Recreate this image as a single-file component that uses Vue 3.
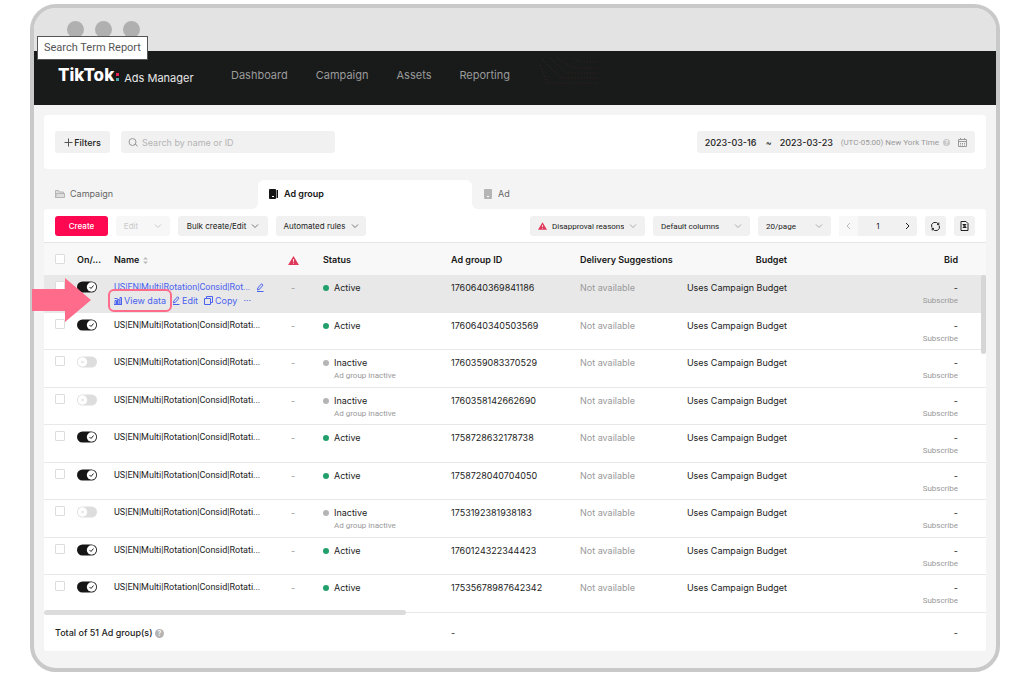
<template>
  <div class="page">
    <div class="window">
      <div class="titlebar">
        <i></i>
        <i></i>
        <i></i>
        <div class="tooltip" role="tooltip">Search Term Report</div>
      </div>

      <header class="nav">
        <div class="brand">
          <strong>TikTok</strong>
          <span class="colon"><b></b><b></b></span>
          <span class="product">Ads Manager</span>
        </div>
        <nav>
          <a v-for="item in menu" :key="item" href="#">{{ item }}</a>
        </nav>
        <svg class="pattern" width="62" height="28" viewBox="0 0 62 28">
          <path d="M34 1l8 4h18M18 1l17 10h25M12 1l15 15h33M4 3l18 18h38M1 8l7 18h52" />
        </svg>
      </header>

      <main>
        <section class="card filters">
          <button class="btn filter-btn">
            <svg width="9" height="9" viewBox="0 0 9 9"><path d="M4.5 .5v8M.5 4.5h8" /></svg>
            Filters
          </button>
          <label class="search">
            <svg width="10" height="10" viewBox="0 0 10 10">
              <circle cx="4.5" cy="5" r="3.5" />
              <path d="M6 7.5l1.5-.5 2 2.5" />
            </svg>
            <input v-model="query" type="text" placeholder="Search by name or ID" aria-label="Search" />
          </label>
          <div class="dates">
            <input v-model="from" type="text" aria-label="Start date" />
            <span class="tilde">~</span>
            <input v-model="to" type="text" aria-label="End date" />
            <span class="zone">(UTC-05:00) New York Time</span>
            <span class="help light">?</span>
            <svg width="9" height="9" viewBox="0 0 9 9">
              <path d="M.5 1.5h8v7h-8zM.5 3.5h8M2.5 0v2M6.5 0v2M2 5.5h1M4 5.5h1M6 5.5h1M2 7h1M4 7h1M6 7h1" />
            </svg>
          </div>
        </section>

        <div class="tabs">
          <button class="tab">
            <svg width="10" height="10" viewBox="0 0 10 10">
              <path d="M.5 8.5v-7h3l1 1.5h4v1.5M.5 8.5l1-4h8v4z" fill="#ddd" stroke="#b5b5b5" />
            </svg>
            Campaign
          </button>
          <button class="tab active">
            <svg width="10" height="10" viewBox="0 0 10 10">
              <rect x="0" y=".5" width="7" height="9" rx="1" fill="#161616" />
              <path d="M3 7.5h2" stroke="#fff" />
              <path d="M8.5 1v8" stroke="#161616" />
            </svg>
            Ad group
          </button>
          <button class="tab">
            <svg width="10" height="10" viewBox="0 0 10 10">
              <rect class="solid" x="1" y="0" width="8" height="10" rx="1" fill="#b5b5b5" />
              <path d="M4 7.5h2" stroke="#fff" />
            </svg>
            Ad
          </button>
        </div>

        <section class="card panel">
          <div class="toolbar">
            <button class="btn create">Create</button>
            <button class="btn edit" disabled>
              Edit
              <svg class="chev" width="8" height="5" viewBox="0 0 8 5"><path d="M1 .5l3 3 3-3" /></svg>
            </button>
            <button class="btn wide">
              Bulk create/Edit
              <svg class="chev" width="8" height="5" viewBox="0 0 8 5"><path d="M1 .5l3 3 3-3" /></svg>
            </button>
            <button class="btn wide">
              Automated rules
              <svg class="chev" width="8" height="5" viewBox="0 0 8 5"><path d="M1 .5l3 3 3-3" /></svg>
            </button>
            <span class="spacer"></span>
            <label v-for="s in selects" :key="s.name" class="select" :class="s.cls">
              <svg v-if="s.warn" class="warn" width="9" height="8" viewBox="0 0 12 10">
                <path d="M6 0l6 10H0z" />
                <path class="mark" d="M6 3.5v3M6 7.5v1" />
              </svg>
              <select :aria-label="s.name">
                <option>{{ s.name }}</option>
              </select>
              <svg class="chev" width="8" height="5" viewBox="0 0 8 5"><path d="M1 .5l3 3 3-3" /></svg>
            </label>
            <div class="pager">
              <button class="prev" disabled aria-label="Previous">
                <svg width="5" height="8" viewBox="0 0 5 8"><path d="M4 1L1 4l3 3" /></svg>
              </button>
              <span>1</span>
              <button aria-label="Next">
                <svg width="5" height="8" viewBox="0 0 5 8"><path d="M1 1l3 3-3 3" /></svg>
              </button>
            </div>
            <button class="btn icon" aria-label="Refresh">
              <svg width="9" height="9" viewBox="0 0 9 9">
                <path d="M.8 5.5A3.7 3.7 0 0 1 7.6 2.5M8.2 3.5A3.7 3.7 0 0 1 1.4 6.5M7.8 .6v2H6M1.2 8.4v-2H3" />
              </svg>
            </button>
            <button class="btn icon" aria-label="Export">
              <svg width="9" height="10" viewBox="0 0 9 10">
                <path d="M1 .5h5l2 2v7H1zM3 3.5h3L3 6.5h3zM3 6.5h3L3 3.5" />
              </svg>
            </button>
          </div>

          <div class="grid">
            <table>
              <colgroup>
                <col v-for="c in cols" :key="c" :class="'c-' + c" />
              </colgroup>
              <thead>
                <tr>
                  <th class="pick"><input type="checkbox" aria-label="Select all" /></th>
                  <th>On/...</th>
                  <th>
                    Name
                    <svg class="sort" width="7" height="9" viewBox="0 0 7 9">
                      <path d="M3.5 1L6 3.5H1zM3.5 8L1 5.5h5z" />
                    </svg>
                  </th>
                  <th class="center">
                    <svg class="warn" width="11" height="9" viewBox="0 0 12 10">
                      <path d="M6 0l6 10H0z" />
                      <path class="mark" d="M6 3.5v3M6 7.5v1" />
                    </svg>
                  </th>
                  <th class="status">Status</th>
                  <th>Ad group ID</th>
                  <th>Delivery Suggestions</th>
                  <th class="right">Budget</th>
                  <th class="right bid">Bid</th>
                </tr>
              </thead>
              <tbody>
                <tr v-for="(row, i) in rows" :key="row.id" :class="{ hover: i === 0 }">
                  <td class="pick">
                    <input type="checkbox" :aria-label="'Select ' + row.id" />
                    <svg v-if="i === 0" class="arrow" width="59" height="44" viewBox="0 0 59 44">
                      <path d="M0 11h33V0l26 22-26 22V33H0z" />
                    </svg>
                  </td>
                  <td>
                    <label class="switch">
                      <input v-model="row.on" type="checkbox" :aria-label="'Toggle ' + row.id" />
                      <svg width="20" height="12" viewBox="0 0 20 12">
                        <rect class="track" y=".5" width="20" height="11" rx="5.5" />
                        <template v-if="row.on">
                          <circle cx="14.5" cy="6" r="4.7" />
                          <path d="M12.5 6l1.5 1.5 2.5-3" stroke="#222" />
                        </template>
                        <template v-else>
                          <circle cx="5.5" cy="6" r="4.7" />
                          <path d="M4.3 4.8l2.4 2.4M6.7 4.8L4.3 7.2" stroke="#ddd" />
                        </template>
                      </svg>
                    </label>
                  </td>
                  <td>
                    <template v-if="i === 0">
                      <div class="line links name">
                        <a href="#">US|EN|Multi|Rotation|Consid|Rot...</a>
                        <svg width="8" height="9" viewBox="0 0 8 9">
                          <path d="M1.5 7l.3-2L5.5 .8l1.5 1.3L3.5 6.3zM1 8.5h6.5" />
                        </svg>
                      </div>
                      <div class="line links">
                        <a href="#" class="view">
                          <svg width="8" height="8" viewBox="0 0 8 8">
                            <path d="M0 7.5h8M1 7V3.5h1.5V7M3.5 7V2.5H5V7M6 7V.5h1.5V7M.5 1.5h3" />
                          </svg>
                          View data
                        </a>
                        <a href="#">
                          <svg width="8" height="9" viewBox="0 0 8 9">
                            <path d="M1.5 7l.3-2L5.5 .8l1.5 1.3L3.5 6.3zM1 8.5h6.5" />
                          </svg>
                          Edit
                        </a>
                        <a href="#">
                          <svg width="9" height="9" viewBox="0 0 9 9">
                            <path d="M.5 2.5h6v6h-6zM2.5 2.5v-2h6v6h-2" />
                          </svg>
                          Copy
                        </a>
                        <a href="#">···</a>
                      </div>
                    </template>
                    <div v-else class="line name">US|EN|Multi|Rotation|Consid|Rotati...</div>
                  </td>
                  <td class="center muted">-</td>
                  <td class="status">
                    <div class="line state" :class="{ on: row.active }">{{ row.active ? "Active" : "Inactive" }}</div>
                    <div v-if="!row.active" class="sub indent">Ad group inactive</div>
                  </td>
                  <td>{{ row.id }}</td>
                  <td class="muted">Not available</td>
                  <td class="right">Uses Campaign Budget</td>
                  <td class="right bid">
                    <div class="line">-</div>
                    <div class="sub">Subscribe</div>
                  </td>
                </tr>
              </tbody>
              <tfoot>
                <tr>
                  <td class="total" colspan="5">
                    Total of 51 Ad group(s)
                    <span class="help">?</span>
                  </td>
                  <td colspan="3">-</td>
                  <td class="right bid">-</td>
                </tr>
              </tfoot>
            </table>
            <span class="vbar"></span>
            <span class="hbar"></span>
          </div>
        </section>
      </main>
    </div>
  </div>
</template>

<script setup>
import { ref } from "vue";

const menu = ["Dashboard", "Campaign", "Assets", "Reporting"];
const cols = ["pick", "on", "name", "warn", "status", "id", "delivery", "budget", "bid"];

const query = ref("");
const from = ref("2023-03-16");
const to = ref("2023-03-23");

const selects = [
  { name: "Disapproval reasons", cls: "reasons", warn: true },
  { name: "Default columns", cls: "columns" },
  { name: "20/page", cls: "size" },
];

const makeRow = (id, active = true) => ({ id, active, on: active });

const rows = ref([
  makeRow("1760640369841186"),
  makeRow("1760640340503569"),
  makeRow("1760359083370529", false),
  makeRow("1760358142662690", false),
  makeRow("1758728632178738"),
  makeRow("1758728040704050"),
  makeRow("1753192381938183", false),
  makeRow("1760124322344423"),
  makeRow("17535678987642342"),
]);
</script>

<style>
body {
  background: #fff;
}
</style>

<style scoped>
* {
  box-sizing: border-box;
}

.page {
  padding: 4px 24px 8px 30px;
  font-family: Inter, "Liberation Sans", sans-serif;
  font-size: 9px;
  line-height: 13px;
  color: #222;
}

.window {
  border: 4px solid #c9c9c9;
  border-radius: 26px;
  background: #f4f4f4;
}

button,
input,
select {
  font: inherit;
  color: inherit;
  border: 0;
  margin: 0;
  padding: 0;
  background: none;
}

a {
  color: inherit;
  text-decoration: none;
}

svg {
  flex: none;
  fill: none;
  stroke: currentColor;
}

.titlebar {
  position: relative;
  display: flex;
  gap: 11px;
  height: 43px;
  padding: 13px 33px;
  background: #e3e3e3;
  border-radius: 22px 22px 0 0;
}

.titlebar i {
  width: 17px;
  height: 17px;
  border-radius: 50%;
  background: #b0b0b0;
}

.tooltip {
  position: absolute;
  left: 3px;
  top: 28px;
  padding: 4px 6px;
  border: 1px solid #555;
  background: #fff;
  color: #555;
  font-family: Roboto, sans-serif;
  font-size: 11px;
  line-height: 14px;
  white-space: nowrap;
}

.nav {
  display: flex;
  height: 54px;
  padding: 0 24px;
  background: #191a1a;
  color: #9a9a9a;
  font-size: 11px;
  line-height: 48px;
}

.brand {
  display: flex;
  width: 173px;
  color: #e8e8e8;
}

.brand strong {
  color: #fff;
  font-size: 17px;
  font-weight: 800;
}

.colon {
  display: flex;
  flex-direction: column;
  gap: 2px;
  padding: 22px 5px 0 2px;
}

.colon b {
  width: 3px;
  height: 3px;
  background: #ee1d52;
}

.colon b + b {
  background: #4aa9b0;
}

.product {
  line-height: 54px;
}

nav {
  display: flex;
  gap: 28px;
}

.pattern {
  margin: 6px 0 0 29px;
  stroke: #3c2426;
  stroke-dasharray: 1 2;
}

main {
  padding: 10px 10px 17px;
}

.card {
  background: #fff;
  border-radius: 3px;
}

.btn,
.select,
.search,
.dates,
.pager {
  display: flex;
  align-items: center;
  border-radius: 3px;
  background: #f1f1f1;
}

.filters {
  display: flex;
  gap: 11px;
  padding: 16px 11px;
}

.filter-btn {
  justify-content: center;
  gap: 1px;
  width: 55px;
  height: 22px;
  font-weight: 500;
}

.filter-btn svg {
  color: #555;
}

.search {
  gap: 4px;
  width: 214px;
  padding: 0 7px;
  color: #999;
}

.search input {
  flex: 1;
  min-width: 0;
}

.search input::placeholder {
  color: #b4b4b4;
}

.dates {
  margin-left: auto;
  padding: 0 8px;
}

.dates input {
  width: 53px;
  font-weight: 500;
}

.tilde {
  width: 22px;
  text-align: center;
}

/* small captions and selects use the narrower face, as do the pipe-separated names */
.zone,
.select,
.sub,
.name {
  font-family: Roboto, sans-serif;
}

.zone {
  padding: 0 4px 0 8px;
  font-size: 8px;
  color: #999;
}

.dates svg {
  margin-left: 8px;
  color: #999;
}

.help {
  display: inline-block;
  width: 9px;
  height: 9px;
  border-radius: 50%;
  background: #b4b4b4;
  color: #fff;
  font-size: 7px;
  line-height: 9px;
  text-align: center;
}

.help.light {
  width: 7px;
  height: 7px;
  background: #c9c9c9;
  font-size: 6px;
  line-height: 7px;
}

.tabs {
  display: flex;
  margin-top: 11px;
}

.tab {
  display: flex;
  align-items: center;
  gap: 5px;
  width: 214px;
  height: 29px;
  padding: 0 0 2px 11px;
  color: #666;
}

.tab .solid {
  stroke: none;
}

.tab.active {
  position: relative;
  border-radius: 6px 6px 0 0;
  background: #fff;
  color: #161616;
  font-weight: 600;
}

.tab.active::before,
.tab.active::after {
  content: "";
  position: absolute;
  bottom: 0;
  width: 6px;
  height: 6px;
}

.tab.active::before {
  right: 100%;
  background: radial-gradient(circle at 0 0, transparent 6px, #fff 6px);
}

.tab.active::after {
  left: 100%;
  background: radial-gradient(circle at 100% 0, transparent 6px, #fff 6px);
}

.toolbar {
  display: flex;
  gap: 8px;
  height: 33px;
  padding: 7px 11px 6px;
  font-size: 8px;
}

.toolbar .btn {
  justify-content: center;
}

.toolbar .create {
  width: 53px;
  background: #fe0851;
  color: #fff;
  font-weight: 500;
}

.toolbar .edit {
  width: 54px;
  gap: 16px;
  background: #f7f7f7;
  color: #c9c9c9;
}

.wide {
  width: 90px;
  gap: 5px;
}

.wide .chev {
  color: #777;
}

.spacer {
  flex: 1;
}

.select {
  padding: 0 8px;
}

.select select {
  flex: 1;
  min-width: 0;
  appearance: none;
}

.select .chev {
  color: #aaa;
}

.reasons {
  width: 115px;
  gap: 5px;
}

.columns {
  width: 97px;
}

.size {
  width: 73px;
}

.pager {
  width: 78px;
}

.pager button {
  display: flex;
  align-items: center;
  justify-content: center;
  width: 19px;
  height: 20px;
}

.pager .prev {
  background: #f8f8f8;
  color: #bbb;
}

.pager span {
  flex: 1;
  text-align: center;
}

.icon {
  width: 21px;
}

.warn {
  fill: #e0385a;
  stroke: none;
}

.warn .mark {
  stroke: #fff;
}

.grid {
  position: relative;
}

table {
  width: 100%;
  table-layout: fixed;
  border-collapse: separate;
  border-spacing: 0;
}

.c-pick {
  width: 33px;
}

.c-on {
  width: 37px;
}

.c-name {
  width: 164px;
}

.c-warn {
  width: 30px;
}

.c-status {
  width: 143px;
}

.c-id {
  width: 129px;
}

.c-delivery {
  width: 100px;
}

.c-budget {
  width: 107px;
}

th,
td {
  padding: 0;
  text-align: left;
  white-space: nowrap;
}

th {
  height: 33px;
  background: #f8f8f8;
  border-top: 1px solid #e6e6e6;
  font-weight: 600;
  color: #161616;
}

th svg {
  vertical-align: middle;
}

.sort {
  fill: #bbb;
  stroke: none;
}

tbody td {
  height: 37px;
  padding-top: 6px;
  border-bottom: 1px solid #e8e8e8;
  vertical-align: top;
}

tbody tr:nth-child(odd) td {
  height: 38px;
}

tr.hover td {
  background: #e8e8e8;
}

.pick {
  position: relative;
  padding-left: 11px;
}

.pick input {
  display: block;
  appearance: none;
  width: 10px;
  height: 10px;
  border: 1px solid #ddd;
  border-radius: 1px;
  background: #fff;
}

.arrow {
  position: absolute;
  z-index: 1;
  left: -12px;
  top: 3px;
  fill: #ff6b8b;
  stroke: none;
}

.switch {
  position: relative;
  display: block;
  width: 20px;
}

.switch input {
  position: absolute;
  opacity: 0;
}

.switch svg {
  display: block;
}

.switch circle {
  fill: #fff;
  stroke: none;
}

.track {
  fill: #ddd;
  stroke: none;
}

.switch input:checked + svg .track {
  fill: #161616;
}

.center,
th.center {
  text-align: center;
}

.status {
  padding-left: 15px;
}

.right {
  text-align: right;
}

.bid {
  padding-right: 28px;
}

td.muted {
  color: #999;
}

.sub {
  font-size: 8px;
  color: #999;
}

.indent {
  padding-left: 11px;
}

.state {
  display: flex;
  align-items: center;
  gap: 5px;
}

.state::before {
  content: "";
  width: 6px;
  height: 6px;
  border-radius: 50%;
  background: #b5b5b5;
}

.state.on::before {
  background: #22a06b;
}

.links {
  display: flex;
  align-items: center;
  gap: 6px;
  color: #4a62ee;
}

.links a {
  display: flex;
  align-items: center;
  gap: 2px;
}

.view {
  position: relative;
}

.view::after {
  content: "";
  position: absolute;
  inset: -5px -6px;
  border: 2px solid #ff6b8b;
  border-radius: 6px;
}

tfoot td {
  height: 38px;
}

.total {
  padding-left: 11px;
  font-weight: 500;
}

.vbar {
  position: absolute;
  top: 33px;
  right: 0;
  width: 5px;
  height: 79px;
  border-radius: 3px;
  background: #d6d6d6;
}

.hbar {
  position: absolute;
  bottom: 36px;
  left: 0;
  width: 362px;
  height: 5px;
  border-radius: 3px;
  background: #dcdcdc;
}
</style>
